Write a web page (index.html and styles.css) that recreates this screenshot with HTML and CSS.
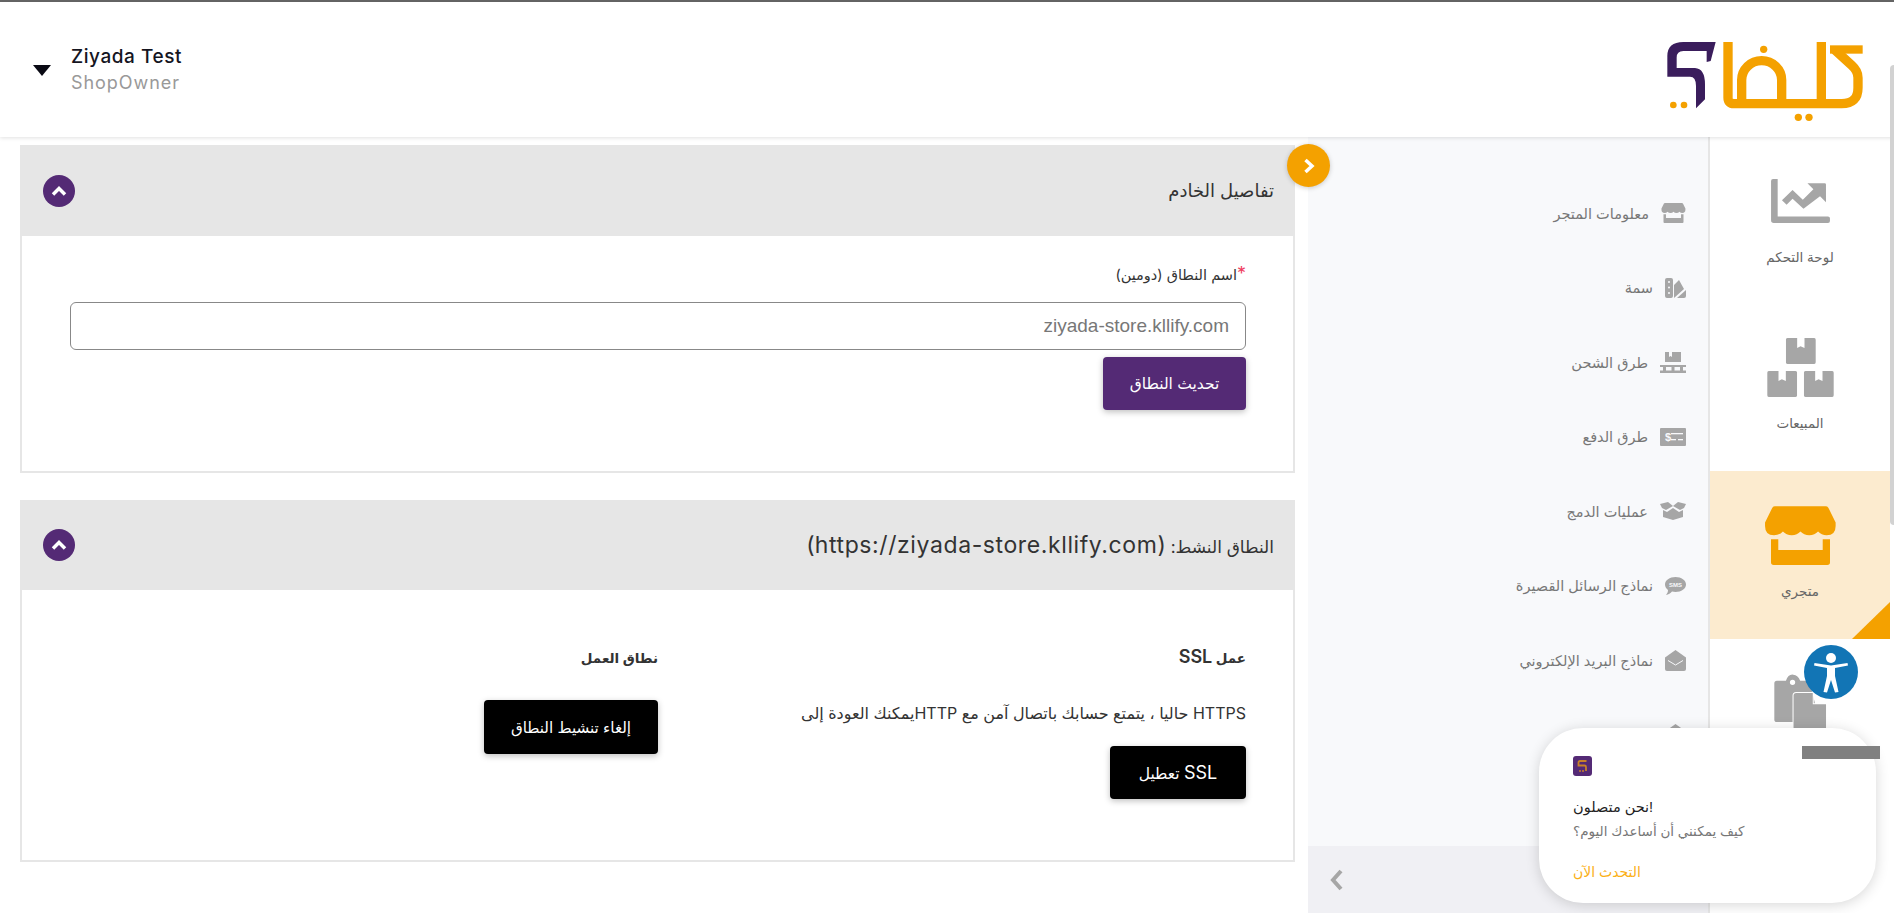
FILE: index.html
```html
<!DOCTYPE html>
<html lang="ar">
<head>
<meta charset="utf-8">
<title>Kllify</title>
<link rel="stylesheet" href="styles.css">
</head>
<body>
<svg class="defs" aria-hidden="true">
  <symbol id="i-store" viewBox="42 45 214 178">
    <path d="M72 46H225Q230 46 233 50L255 95V105Q255 133 228 133Q212 133 202 122Q192 133 175.500 133Q159 133 149 122Q139 133 122.500 133Q106 133 96 122Q86 133 69 133Q42 133 42 105V95L64 50Q67 46 72 46Z"/>
    <path d="M60 145H82V178H216V145H238V215Q238 223 230 223H68Q60 223 60 215Z"/>
  </symbol>
  <symbol id="i-box" viewBox="0 0 90 78">
    <path d="M5 0H34V30L44 25L56 30V0H85Q90 0 90 5V73Q90 78 85 78H5Q0 78 0 73V5Q0 0 5 0Z"/>
  </symbol>
</svg>

<div class="app">
  <header class="topbar">
    <div class="user">
      <span class="caret"></span>
      <div class="user-text">
        <div class="user-name">Ziyada Test</div>
        <div class="user-role">ShopOwner</div>
      </div>
    </div>
    <svg class="logo" viewBox="0 0 630 270">
      <path class="logo-purple" d="M167 18L152 75L140 78V45H70Q50 45 50 65V96H105Q135 98 135 145V190L108 217V150Q108 122 90 122H22V60Q22 18 70 18Z"/>
      <g class="logo-line">
        <path d="M204 18V185Q204 203 222 203H545Q594 203 594 155V125Q594 105 575 88L525 42"/>
        <path d="M484 18V195"/>
        <path d="M245 195V132A60 58 0 0 1 365 132V195"/>
      </g>
      <g class="logo-orange">
        <rect x="510" y="28" width="98" height="25"/>
        <circle cx="311" cy="40" r="11"/>
        <circle cx="415" cy="244" r="11"/>
        <circle cx="447" cy="244" r="11"/>
        <circle cx="40" cy="207" r="10"/>
        <circle cx="72" cy="207" r="10"/>
      </g>
    </svg>
  </header>

  <div class="main">
    <nav class="rail">
      <a class="rail-item">
        <span class="rail-icon">
          <svg class="ic-dash" viewBox="60 25 178 133">
            <path d="M60 31Q60 25 66 25H80V138H232Q238 138 238 144V152Q238 158 232 158H68Q60 158 60 150Z"/>
            <path d="M170 38H222Q226 38 226 42V95L208 77L158 115L125 85L107 103L93 89L125 58L156 88L188 56Z"/>
          </svg>
        </span>
        <span class="rail-label">لوحة التحكم</span>
      </a>
      <a class="rail-item">
        <span class="rail-icon">
          <svg class="ic-sales" viewBox="48 505 200 177">
            <use href="#i-box" x="104" y="505" width="90" height="78"/>
            <use href="#i-box" x="48" y="604" width="90" height="78"/>
            <use href="#i-box" x="158" y="604" width="90" height="78"/>
          </svg>
        </span>
        <span class="rail-label">المبيعات</span>
      </a>
      <a class="rail-item rail-active">
        <span class="rail-icon">
          <svg class="ic-store-big"><use href="#i-store"/></svg>
        </span>
        <span class="rail-label">متجري</span>
        <span class="corner"></span>
      </a>
      <a class="rail-item">
        <span class="rail-icon">
          <svg class="ic-tags" viewBox="70 545 158 175">
            <path fill-rule="evenodd" d="M78 565H105Q112 545 127 547Q142 548 148 565H175L192 630V690H78Q70 690 70 682V573Q70 565 78 565ZM125 562A8 8 0 1 0 125 578A8 8 0 1 0 125 562Z"/>
            <path class="tag-front" d="M136 602H186V636H226V725H128V610Q128 602 136 602Z"/>
          </svg>
        </span>
        <span class="rail-label">المنتجات</span>
      </a>
    </nav>

    <aside class="side">
      <ul class="side-list">
        <li class="side-item">
          <svg class="s-store"><use href="#i-store"/></svg>
          <span>معلومات المتجر</span>
        </li>
        <li class="side-item">
          <svg class="s-palette" viewBox="0 0 21 20">
            <path fill-rule="evenodd" d="M2 0H6Q8 0 8 2V18Q8 20 6 20H2Q0 20 0 18V2Q0 0 2 0ZM4 3A1 1 0 1 0 4 5A1 1 0 1 0 4 3ZM4 8.500A1 1 0 1 0 4 10.500A1 1 0 1 0 4 8.500ZM4 14A1 1 0 1 0 4 16A1 1 0 1 0 4 14Z"/>
            <path d="M9 7L14 2L19 11L9 20ZM12 20L21 12V18Q21 20 19 20Z"/>
          </svg>
          <span>سمة</span>
        </li>
        <li class="side-item">
          <svg class="s-pallet" viewBox="0 0 26 21">
            <path d="M5 0H9V5L10.500 4L12 5V0H16V0H21V10H5Z"/>
            <path fill-rule="evenodd" d="M0 13H26V15H0ZM0 18.500H26V21H0ZM3 15H6V18.500H3ZM11.500 15H14.500V18.500H11.500ZM20 15H23V18.500H20Z"/>
          </svg>
          <span>طرق الشحن</span>
        </li>
        <li class="side-item">
          <svg class="s-money" viewBox="0 0 26 18">
            <rect width="26" height="18" rx="1"/>
            <text class="s-money-sign" x="5" y="13">$</text>
            <rect class="s-white" x="11" y="5" width="12" height="1.300"/>
            <rect class="s-white" x="11" y="11" width="5" height="1.300"/>
            <rect class="s-white" x="18" y="11" width="5" height="1.300"/>
          </svg>
          <span>طرق الدفع</span>
        </li>
        <li class="side-item">
          <svg class="s-merge" viewBox="0 0 26 18">
            <path d="M0 2L8 0L13 4L18 0L26 2L24 6L20 8L13 4L6 8L2 6Z"/>
            <path d="M3 8L7 10L13 6L19 10L23 8V15L13 18L3 15Z"/>
          </svg>
          <span>عمليات الدمج</span>
        </li>
        <li class="side-item">
          <svg class="s-sms" viewBox="0 0 21 18">
            <path d="M10.500 0C16.300 0 21 3.400 21 7.500C21 11.600 16.300 15 10.500 15C9.300 15 8.200 14.900 7 14.600C5.500 16.500 3.500 17.500 1 18C2.300 16.500 3 15 3 13C1.100 11.600 0 9.700 0 7.500C0 3.400 4.700 0 10.500 0Z"/>
            <text class="s-sms-text" x="10.500" y="10">SMS</text>
          </svg>
          <span>نماذج الرسائل القصيرة</span>
        </li>
        <li class="side-item">
          <svg class="s-mail" viewBox="0 0 21 21">
            <path d="M10.500 0L21 7.500V19Q21 21 19 21H2Q0 21 0 19V7.500Z"/>
            <path class="s-chevron" d="M3 10.500L10.500 15L18 10.500"/>
          </svg>
          <span>نماذج البريد الإلكتروني</span>
        </li>
        <li class="side-item">
          <svg class="s-mail" viewBox="0 0 21 21">
            <path d="M10.500 0L21 7.500V19Q21 21 19 21H2Q0 21 0 19V7.500Z"/>
          </svg>
          <span>نماذج الصوت</span>
        </li>
      </ul>
      <div class="side-foot">
        <svg class="foot-chevron" viewBox="0 0 14 22"><path d="M11 2L3 11L11 20"/></svg>
      </div>
    </aside>

    <section class="content">
      <article class="card card-server">
        <header class="card-head">
          <h2 class="card-title">تفاصيل الخادم</h2>
          <span class="toggle"><svg viewBox="0 0 16 12"><path d="M2 9.500L8 3.500L14 9.500"/></svg></span>
        </header>
        <div class="card-body">
          <label class="field-label"><span class="req">*</span>اسم النطاق (دومين)</label>
          <input class="field-input" type="text" value="ziyada-store.kllify.com">
          <button class="btn btn-purple">تحديث النطاق</button>
        </div>
      </article>

      <article class="card card-active">
        <header class="card-head">
          <h2 class="card-title card-title-sm">النطاق النشط: <span class="latin">(https://ziyada-store.kllify.com)</span></h2>
          <span class="toggle"><svg viewBox="0 0 16 12"><path d="M2 9.500L8 3.500L14 9.500"/></svg></span>
        </header>
        <div class="card-body two-col">
          <div class="col">
            <h3 class="col-title">عمل <span class="latin-title">SSL</span></h3>
            <p class="col-text">HTTPS حاليا ، يتمتع حسابك باتصال آمن مع HTTPيمكنك العودة إلى</p>
            <button class="btn btn-black btn-ssl"><span class="latin-btn">SSL</span> تعطيل</button>
          </div>
          <div class="col">
            <h3 class="col-title">نطاق العمل</h3>
            <button class="btn btn-black btn-deact">إلغاء تنشيط النطاق</button>
          </div>
        </div>
      </article>
    </section>
  </div>
</div>

<button class="side-toggle" aria-label="toggle"><svg viewBox="0 0 14 18"><path d="M3.500 3L10 9L3.500 15"/></svg></button>
<div class="scroll-thumb"></div>

<button class="a11y" aria-label="accessibility">
  <svg viewBox="0 0 54 54">
    <circle cx="27" cy="13" r="5"/>
    <path d="M10 20.500L23 23V31L19.500 47L23 47.500L27 35L31 47.500L34.500 47L31 31V23L44 20.500L43.500 18L27 20.500L10.500 18Z"/>
  </svg>
</button>

<div class="chat">
  <span class="chat-bar"></span>
  <svg class="chat-logo" viewBox="0 0 19 20">
    <rect class="chat-logo-bg" width="19" height="20" rx="3"/>
    <path class="chat-logo-s" d="M13.500 5H7Q5.500 5 5.500 6.500V9.500H11.500Q13 9.500 13 11V15"/>
    <circle class="chat-logo-dot" cx="7" cy="15" r="1"/>
    <circle class="chat-logo-dot" cx="10" cy="15" r="1"/>
  </svg>
  <p class="chat-title" dir="rtl">!نحن متصلون</p>
  <p class="chat-text" dir="rtl">كيف يمكنني أن أساعدك اليوم؟</p>
  <a class="chat-link">التحدث الآن</a>
</div>
</body>
</html>
```

FILE: styles.css
```css
* { box-sizing: border-box; }
html, body { margin: 0; height: 100%; overflow: hidden; background: #fff; }
body { font-family: Inter, "Liberation Sans", "DejaVu Sans", sans-serif; color: #333; }
.defs { position: absolute; width: 0; height: 0; }
h2, h3, p, ul { margin: 0; padding: 0; }
ul { list-style: none; }

.app { height: 913px; display: flex; flex-direction: column; border-top: 2px solid #666; }
.topbar { height: 135px; flex: none; display: flex; justify-content: space-between; align-items: flex-start; background: #fff; box-shadow: 0 1px 4px rgba(0,0,0,.12); position: relative; z-index: 2; }
.user { display: flex; align-items: center; gap: 20px; padding: 42px 0 0 33px; }
.caret { width: 0; height: 0; border-left: 9px solid transparent; border-right: 9px solid transparent; border-top: 11px solid #0a0a14; margin-top: 2px; }
.user-name { font-size: 19px; line-height: 26px; color: #15151f; font-weight: 500; letter-spacing: .55px; }
.user-role { font-size: 18px; line-height: 25px; color: #999; letter-spacing: .95px; }
.logo { width: 210px; height: 90px; margin: 34px 24px 0 0; flex: none; }
.logo-purple { fill: #3a1d5c; }
.logo-orange { fill: #f4a100; }
.logo-line path { fill: none; stroke: #f4a100; stroke-width: 28; }

.main { flex: 1; min-height: 0; display: flex; direction: rtl; padding-right: 4px; }

.rail { width: 182px; flex: none; border-left: 2px solid #e6e6e6; background: #fff; direction: rtl; overflow: hidden; }
.rail-item { display: block; height: 167px; padding-top: 34px; text-align: center; position: relative; color: #666; }
.rail-item:first-child { height: 166px; }
.rail-item:nth-child(2) { height: 168px; }
.rail-active { background: #fcebcf; height: 168px; }
.rail-icon { display: flex; height: 60px; justify-content: center; align-items: center; color: #a6a6a6; }
.rail-icon svg { fill: currentColor; display: block; }
.rail-active .rail-icon { color: #f4a100; }
.ic-dash { width: 59px; height: 44px; }
.ic-sales { width: 67px; height: 59px; }
.ic-store-big { width: 71px; height: 59px; }
.ic-tags { width: 53px; height: 58px; overflow: hidden; }
.rail-icon .tag-front { stroke: #fff; stroke-width: 6; paint-order: stroke; }
.rail-label { display: block; margin-top: 16px; font-size: 13.500px; line-height: 20px; }
.corner { position: absolute; right: 0; bottom: 0; width: 0; height: 0; border-bottom: 37px solid #f4a100; border-left: 38px solid transparent; }

.side { width: 400px; flex: none; display: flex; flex-direction: column; background: #f8f9fb; }
.side-list { flex: 1; min-height: 0; overflow: hidden; padding: 39px 22px 0 0; }
.side-item { display: flex; align-items: center; gap: 12px; height: 74.500px; font-size: 14.500px; color: #777; }
.side-item svg { fill: #a6a6a6; flex: none; display: block; }
.s-store { width: 25px; height: 20px; }
.s-palette { width: 21px; height: 20px; }
.s-pallet { width: 26px; height: 21px; }
.s-money { width: 26px; height: 18px; }
.s-merge { width: 26px; height: 18px; }
.s-sms { width: 21px; height: 18px; }
.s-mail { width: 21px; height: 21px; }
.s-white { fill: #f8f9fb; }
.side-item .s-money-sign { fill: #f8f9fb; font: 700 11px "Liberation Sans", sans-serif; direction: ltr; }
.side-item .s-sms-text { fill: #f8f9fb; font: 700 6px "Liberation Sans", sans-serif; text-anchor: middle; direction: ltr; }
.side-item .s-chevron { fill: none; stroke: #f8f9fb; stroke-width: 1; }
.side-foot { height: 67px; flex: none; background: #f0f0f4; display: flex; justify-content: flex-end; align-items: center; padding-left: 22px; }
.foot-chevron { width: 14px; height: 22px; display: block; }
.foot-chevron path { fill: none; stroke: #a6a6a6; stroke-width: 4; }

.content { flex: 1; min-width: 0; padding: 8px 13px 0 20px; background: #fff; }
.card { border: 2px solid #e6e6e6; border-top: 0; background: #fff; }
.card-server { height: 328px; }
.card-active { height: 362px; margin-top: 27px; }
.card-head { display: flex; justify-content: space-between; align-items: center; background: #e6e6e6; padding: 0 19px 0 23px; margin-left: -2px; }
.card-server .card-head { height: 91px; }
.card-active .card-head { height: 90px; }
.card-title { font-weight: 400; font-size: 18px; color: #333; }
.card-title-sm { font-size: 17px; }
.latin { font-size: 23px; letter-spacing: .6px; }
.toggle { width: 32px; height: 32px; border-radius: 50%; background: #542a75; display: flex; align-items: center; justify-content: center; }
.toggle svg { width: 16px; height: 12px; display: block; }
.toggle path { fill: none; stroke: #fff; stroke-width: 3.500; }

.card-body { padding: 27px 47px 0 48px; }
.field-label { display: block; font-size: 14.500px; line-height: 24px; color: #333; margin-bottom: 15px; }
.req { color: #f0405f; font-size: 18px; line-height: 0; }
.field-input { display: block; width: 100%; height: 48px; border: 1px solid #888; border-radius: 6px; padding: 0 16px; font: 19px "Liberation Sans", sans-serif; color: #777; background: #fff; direction: rtl; outline: none; }
.btn { display: block; border: 0; border-radius: 4px; color: #fff; font-family: inherit; font-size: 15.500px; box-shadow: 0 2px 6px rgba(0,0,0,.25); }
.btn-purple { width: 143px; height: 53px; margin-top: 7px; background: #542a75; }
.btn-black { background: #000; }
.btn-ssl { width: 136px; height: 53px; margin-top: 21px; }
.latin-btn { font-size: 18px; }
.btn-deact { width: 174px; height: 54px; margin-top: 30px; font-size: 15.200px; }
.two-col { display: grid; grid-template-columns: 588px 1fr; padding-top: 56px; }
.col-title { font-size: 13.500px; line-height: 24px; font-weight: 600; color: #333; }
.latin-title { font-size: 18px; line-height: 0; }
.col-text { font-size: 16px; line-height: 24px; margin-top: 31px; color: #333; }

.side-toggle { position: absolute; left: 1287px; top: 144px; width: 43px; height: 43px; border: 0; padding: 0; border-radius: 50%; background: #f4a100; box-shadow: 0 1px 5px rgba(0,0,0,.2); display: flex; align-items: center; justify-content: center; z-index: 3; }
.side-toggle svg { width: 14px; height: 18px; display: block; }
.side-toggle path { fill: none; stroke: #fff; stroke-width: 3.500; }
.scroll-thumb { position: absolute; left: 1890px; top: 65px; width: 4px; height: 460px; background: #d2d2d2; border-radius: 4px 0 0 4px; z-index: 3; }

.a11y { position: absolute; left: 1804px; top: 645px; width: 54px; height: 54px; padding: 0; border: 0; border-radius: 50%; background: #1275b5; z-index: 4; }
.a11y svg { width: 54px; height: 54px; display: block; fill: #fff; }

.chat { position: absolute; left: 1539px; top: 728px; width: 337px; height: 175px; padding: 28px 34px 0; border-radius: 44px; background: #fff; box-shadow: 0 2px 14px rgba(0,0,0,.16); z-index: 5; font-family: "Liberation Sans", "DejaVu Sans", sans-serif; }
.chat-bar { position: absolute; left: 263px; top: 18px; width: 78px; height: 13px; background: #808080; }
.chat-logo { width: 19px; height: 20px; display: block; }
.chat-logo-bg { fill: #542a75; }
.chat-logo-s { fill: none; stroke: #c9812a; stroke-width: 1.800; }
.chat-logo-dot { fill: #c9812a; }
.chat-title { margin-top: 19px; font-size: 14.500px; line-height: 24px; color: #222; text-align: left; }
.chat-text { font-size: 13.500px; line-height: 26px; color: #777; text-align: left; }
.chat-link { display: block; margin-top: 15px; font-size: 14px; line-height: 24px; color: #fbb016; text-align: left; }
```
